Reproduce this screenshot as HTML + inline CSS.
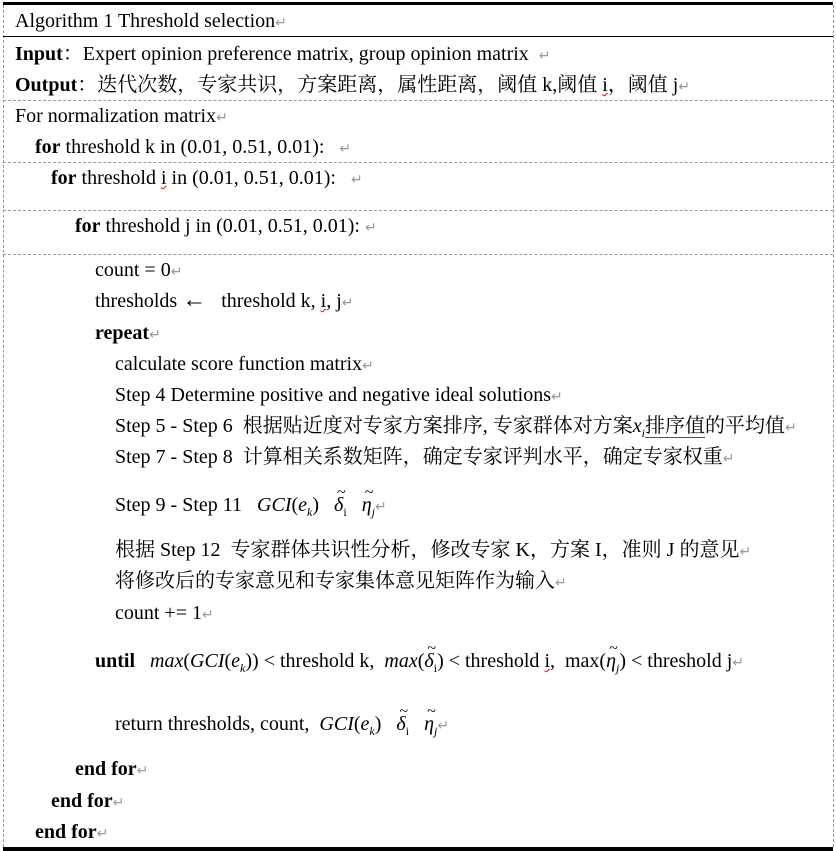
<!DOCTYPE html>
<html><head><meta charset="utf-8"><style>
html,body{margin:0;padding:0;background:#fff}
body{width:836px;height:851px;position:relative;overflow:hidden;font-family:"Liberation Serif","Noto Serif CJK SC","Noto Sans CJK SC",serif;font-size:20px;color:#000}
.l{position:absolute;white-space:nowrap;line-height:22px}
.r{color:#999;font-size:14px;font-family:"DejaVu Sans",sans-serif}
.h{position:absolute;left:3px;width:830px}
.d{border-top:1px dashed #999}
b{font-weight:bold}
i{font-style:italic}
sub{font-size:12px;vertical-align:-5px}
.sq{text-decoration:underline wavy red;text-decoration-thickness:1px}
.t{position:relative;display:inline-block;font-style:italic}
.t .tl{position:absolute;left:3px;top:-12px;font-style:normal;font-size:16px}
</style></head><body>
<div class="h" style="top:2px;height:3px;background:#000"></div>
<div class="h" style="top:847px;height:4px;background:#000"></div>
<div style="position:absolute;left:3px;top:5px;height:842px;border-left:1px dashed #999"></div>
<div style="position:absolute;left:833px;top:5px;height:842px;border-left:1px dashed #999"></div>
<div class="h" style="top:36px;height:1px;background:#000"></div>
<div class="h d" style="top:100px"></div>
<div class="h d" style="top:162px"></div>
<div class="h d" style="top:210px"></div>
<div class="h d" style="top:254px"></div>

<div class="l" style="left:15px;top:10px">Algorithm 1 Threshold selection<span class="r">↵</span></div>
<div class="l" style="left:15px;top:43px"><b>Input</b>：Expert opinion preference matrix, group opinion matrix &nbsp;<span class="r">↵</span></div>
<div class="l" style="left:15px;top:74px"><b>Output</b>：迭代次数，专家共识，方案距离，属性距离，阈值 k,阈值 <span class="sq">i</span>，阈值 j<span class="r">↵</span></div>
<div class="l" style="left:15px;top:105px">For normalization matrix<span class="r">↵</span></div>
<div class="l" style="left:35px;top:136px"><b>for</b> threshold k in (0.01, 0.51, 0.01): &nbsp; <span class="r">↵</span></div>
<div class="l" style="left:51px;top:167px"><b>for</b> threshold <span class="sq">i</span> in (0.01, 0.51, 0.01): &nbsp; <span class="r">↵</span></div>
<div class="l" style="left:75px;top:215px"><b>for</b> threshold j in (0.01, 0.51, 0.01): <span class="r">↵</span></div>
<div class="l" style="left:95px;top:259px">count = 0<span class="r">↵</span></div>
<div class="l" style="left:95px;top:289px">thresholds <span style="font-size:24px">←</span> &nbsp; threshold k, <span class="sq">i</span>, j<span class="r">↵</span></div>
<div class="l" style="left:95px;top:322px"><b>repeat</b><span class="r">↵</span></div>
<div class="l" style="left:115px;top:353px">calculate score function matrix<span class="r">↵</span></div>
<div class="l" style="left:115px;top:384px">Step 4 Determine positive and negative ideal solutions<span class="r">↵</span></div>
<div class="l" style="left:115px;top:415px">Step 5 - Step 6&nbsp; 根据贴近度对专家方案排序, 专家群体对方案<i>x<sub>i</sub></i><span style="border-bottom:1px solid #2255cc">排序值</span>的平均值<span class="r">↵</span></div>
<div class="l" style="left:115px;top:446px">Step 7 - Step 8&nbsp; 计算相关系数矩阵，确定专家评判水平，确定专家权重<span class="r">↵</span></div>
<div class="l" style="left:115px;top:494px">Step 9 - Step 11&nbsp;&nbsp; <i>GCI</i>(<i>e<sub>k</sub></i>)&nbsp;&nbsp; <span class="t">δ<span class="tl">~</span></span><sub>i</sub>&nbsp;&nbsp; <span class="t">η<span class="tl">~</span></span><sub><i>j</i></sub><span class="r">↵</span></div>
<div class="l" style="left:115px;top:539px">根据 Step 12&nbsp; 专家群体共识性分析，修改专家 K，方案 I，准则 J 的意见<span class="r">↵</span></div>
<div class="l" style="left:115px;top:570px">将修改后的专家意见和专家集体意见矩阵作为输入<span class="r">↵</span></div>
<div class="l" style="left:115px;top:602px">count += 1<span class="r">↵</span></div>
<div class="l" style="left:95px;top:650px"><b>until</b>&nbsp;&nbsp; <i>max</i>(<i>GCI</i>(<i>e<sub>k</sub></i>)) &lt; threshold k,&nbsp; <i>max</i>(<span class="t">δ<span class="tl">~</span></span><sub>i</sub>) &lt; threshold <span class="sq">i</span>,&nbsp; max(<span class="t">η<span class="tl">~</span></span><sub><i>j</i></sub>) &lt; threshold j<span class="r">↵</span></div>
<div class="l" style="left:115px;top:713px">return thresholds, count,&nbsp; <i>GCI</i>(<i>e<sub>k</sub></i>)&nbsp;&nbsp; <span class="t">δ<span class="tl">~</span></span><sub>i</sub>&nbsp;&nbsp; <span class="t">η<span class="tl">~</span></span><sub><i>j</i></sub><span class="r">↵</span></div>
<div class="l" style="left:75px;top:758px"><b>end for</b><span class="r">↵</span></div>
<div class="l" style="left:51px;top:790px"><b>end for</b><span class="r">↵</span></div>
<div class="l" style="left:35px;top:821px"><b>end for</b><span class="r">↵</span></div>
</body></html>
